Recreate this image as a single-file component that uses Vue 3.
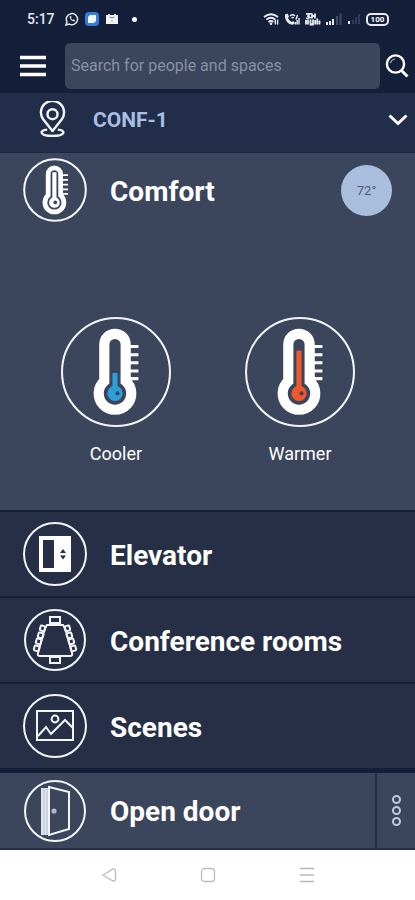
<template>
  <div class="app">
    <div class="status">
      <div class="status__group">
        <span class="status__time">5:17</span>
        <svg class="status__icon" viewBox="0 0 14 14" aria-hidden="true">
          <path d="M1 13 L2 9.8 A5.6 5.6 0 1 1 4.3 12.1 Z" fill="none" stroke="#e4e7ee" stroke-width="1.5" />
          <path d="M4.7 4.2 C4.5 7.2 6.8 9.5 9.7 9.4 L10 8 L8.5 7.3 L7.8 8 Q6.5 7.4 6 6.2 L6.6 5.5 L6 4 Z" fill="#e4e7ee" />
        </svg>
        <svg class="status__icon" viewBox="0 0 14 14" aria-hidden="true">
          <rect width="14" height="14" rx="4" fill="#2f80dc" />
          <path d="M3 5 L5 3 H11 V9 L9 11 H3 Z" fill="#f5f9ff" />
        </svg>
        <svg class="status__icon" viewBox="0 0 14 14" aria-hidden="true">
          <path d="M1 3 H3 V2 H5 V3 H9 V2 H11 V3 H13 V12 H1 Z" fill="#f1f2f5" />
          <path d="M4.5 5 L7 6 L9.5 5 M7 8.3 V9.5" fill="none" stroke="#7b8396" stroke-width="1" />
        </svg>
        <span class="status__dot"></span>
      </div>
      <div class="status__group status__group--right">
        <svg class="status__net" viewBox="0 0 16 14" aria-hidden="true">
          <path d="M1 5 Q8 -0.5 15 5 M3.3 7.6 Q8 3.8 12.5 7.6 M5.5 10 Q8 8 10.3 10" fill="none" stroke="#e9ebf1" stroke-width="1.8" />
          <circle cx="8" cy="11.8" r="1.3" fill="#e9ebf1" />
          <path d="M12.3 12.5 V8 M14.6 7.5 V12.5" stroke="#e9ebf1" stroke-width="1.4" />
        </svg>
        <svg class="status__net" viewBox="0 0 16 14" aria-hidden="true">
          <path d="M1 2.5 L3.5 1.5 L5 4.5 L4 6 Q5 8.7 7.6 10 L9 9 L11 11 L9 12.8 C4 12.8 0.5 8 1 2.5 Z" fill="#e9ebf1" />
          <path d="M6 4 Q8.5 1.5 11 4 M7.5 6 Q8.7 5 9.8 6 M12 7.5 L13.5 3" fill="none" stroke="#e9ebf1" stroke-width="1.5" />
          <path d="M11.5 12.5 V10 M13.2 12.5 V8 M15 12.5 V6" stroke="#e9ebf1" stroke-width="1.4" />
        </svg>
        <svg class="status__net" viewBox="0 0 16 14" aria-hidden="true">
          <path d="M1 1.8 H5 L3 4 L5 5.5 L1 6.5 M7 1.5 V6.5 M7 4 H10 M10 1.5 V6.5 M1 8 V12.5 M3 7.5 V12.5 M5.5 7.5 V12.5 H8 V7.5 M10.2 12.5 V8 M12.3 6.5 V12.5 M14.5 8.5 V12.5" fill="none" stroke="#e9ebf1" stroke-width="1.8" />
        </svg>
        <svg class="status__signal" viewBox="0 0 16 14" aria-hidden="true">
          <path d="M1 13 V10 M4 13 V9 M7 13 V7" stroke="#e9ebf1" stroke-width="2" />
          <path d="M11 13 V4 M14.5 13 V1.5" stroke="#3d4a68" stroke-width="2" />
        </svg>
        <svg class="status__signal status__signal--weak" viewBox="0 0 14 14" aria-hidden="true">
          <path d="M2 12 V9" stroke="#e9ebf1" stroke-width="2" />
          <path d="M6 12 V8 M9 12 V5 M12 12 V2" stroke="#2f3c59" stroke-width="2" />
        </svg>
        <span class="status__battery">100</span>
      </div>
    </div>

    <header class="topbar">
      <button class="icon-btn topbar__menu" type="button" aria-label="Menu">
        <svg viewBox="0 0 26 22" width="26" height="22">
          <path d="M0 2.5 H26 M0 11 H26 M0 19.5 H26" stroke="#fff" stroke-width="3.4" />
        </svg>
      </button>
      <input
        v-model="query"
        class="topbar__input"
        type="text"
        aria-label="Search for people and spaces"
        placeholder="Search for people and spaces"
      />
      <button class="icon-btn topbar__search" type="button" aria-label="Search">
        <svg viewBox="0 0 24 24" width="24" height="24">
          <circle cx="10.5" cy="10" r="8.6" fill="none" stroke="#fff" stroke-width="2.4" />
          <path d="M5.5 9 Q6.5 5.5 10 5" fill="none" stroke="#aab2c4" stroke-width="1.2" />
          <path d="M16.5 16.5 L22.5 22.5" stroke="#fff" stroke-width="3" />
        </svg>
      </button>
    </header>

    <button class="location" type="button">
      <svg class="location__pin" viewBox="0 0 28 38" aria-hidden="true">
        <g fill="none" stroke="#f3f5f9" stroke-width="2.5">
          <path d="M14 31 L4.5 19 A12 12 0 1 1 23.5 19 Z" stroke-linejoin="round" />
          <circle cx="14" cy="13.5" r="5.2" />
          <path d="M8.5 29.5 C0 30 0 36 14 36 S28 30 19.5 29.5" />
        </g>
      </svg>
      <span class="location__name">CONF-1</span>
      <svg class="location__chevron" viewBox="0 0 20 12" aria-hidden="true">
        <path d="M1.5 1.5 L10 9.5 L18.5 1.5" fill="none" stroke="#fff" stroke-width="3" />
      </svg>
    </button>

    <section class="comfort">
      <div class="comfort__head">
        <svg class="round" viewBox="0 0 108 108" aria-hidden="true">
          <circle cx="54" cy="54" r="52" fill="none" stroke="#f3f5f9" stroke-width="3.4" />
          <path :d="tube" fill="none" stroke="#fff" stroke-width="8" />
          <path :d="ticks" stroke="#fff" stroke-width="3" />
          <path d="M53 75 V24" stroke="#fff" stroke-width="7" />
          <circle cx="53" cy="75" r="9" fill="#fff" />
          <circle cx="54.5" cy="75" r="3.2" fill="#39445c" />
        </svg>
        <h2 class="title">Comfort</h2>
        <span class="comfort__temp">72°</span>
      </div>
      <div class="comfort__actions">
        <button v-for="mode in modes" :key="mode.label" class="mode" type="button">
          <svg class="mode__icon" viewBox="0 0 108 108" aria-hidden="true">
            <circle cx="54" cy="54" r="53" fill="none" stroke="#f3f5f9" stroke-width="2" />
            <path :d="tube" fill="none" stroke="#fff" stroke-width="10" />
            <path :d="ticks" stroke="#fff" stroke-width="3" />
            <path :d="mode.stem" :stroke="mode.color" stroke-width="5" />
            <circle cx="53" cy="75" r="7.5" :fill="mode.color" />
            <circle cx="55.5" cy="75" r="2" fill="#39445c" />
          </svg>
          <span class="mode__label">{{ mode.label }}</span>
        </button>
      </div>
    </section>

    <nav class="list" aria-label="Controls">
      <button class="row" type="button">
        <svg class="round" viewBox="0 0 64 64" aria-hidden="true">
          <circle cx="32" cy="32" r="31" fill="none" stroke="#f3f5f9" stroke-width="2" />
          <path d="M16 14 H48 V50 H16 Z M20 18 V46 H31 V18 Z" fill="#fff" fill-rule="evenodd" />
          <path d="M37 31 L40 27 L43 31 Z M37 33.5 L40 37.5 L43 33.5 Z" fill="#262f45" />
        </svg>
        <span class="title">Elevator</span>
      </button>
      <button class="row" type="button">
        <svg class="round" viewBox="0 0 64 64" aria-hidden="true">
          <g fill="none" stroke="#f3f5f9" stroke-width="2">
            <circle cx="32" cy="32" r="30" />
            <path d="M24 17 H40 L42 20 L49 45 Q50 48 47 48 H17 Q14 48 15 45 L22 20 Z" />
            <path d="M27 15 V9 H37 V15 Z M27 49 H37 V55 H27 Z" />
            <g v-for="chair in chairs" :key="chair.y">
              <rect x="-3" y="-3" width="5" height="5" rx="1" :transform="`translate(${chair.x} ${chair.y}) rotate(16)`" />
              <rect x="-2" y="-3" width="5" height="5" rx="1" :transform="`translate(${64 - chair.x} ${chair.y}) rotate(-16)`" />
            </g>
          </g>
        </svg>
        <span class="title">Conference rooms</span>
      </button>
      <button class="row" type="button">
        <svg class="round" viewBox="0 0 64 64" aria-hidden="true">
          <g fill="none" stroke="#f3f5f9" stroke-width="2">
            <circle cx="32" cy="32" r="31" />
            <rect x="14" y="17" width="36" height="29" />
            <path d="M15 42 L23 33 L28 40 L42 26 L50 34" />
            <circle cx="32" cy="25" r="3.4" />
          </g>
        </svg>
        <span class="title">Scenes</span>
      </button>
    </nav>

    <div class="door">
      <button class="row row--door" type="button">
        <svg class="round" viewBox="0 0 64 64" aria-hidden="true">
          <circle cx="32" cy="32" r="30" fill="none" stroke="#f3f5f9" stroke-width="2" />
          <path d="M18 9 H25 V56 H18 Z" fill="#dfe4ee" />
          <path d="M21 9 V56 M24 9 V56" stroke="#aeb7cb" stroke-width="0.8" />
          <path d="M26 8 L46 13 V50 L26 56 Z" fill="none" stroke="#f3f5f9" stroke-width="2" />
          <circle cx="31" cy="32" r="2.6" fill="#aeb7cb" />
        </svg>
        <span class="title">Open door</span>
      </button>
      <button class="door__more" type="button" aria-label="More options">
        <span v-for="n in 3" :key="n" class="door__dot"></span>
      </button>
    </div>

    <div class="sysnav">
      <button class="icon-btn" type="button" aria-label="Back">
        <svg viewBox="0 0 16 16" width="16" height="16">
          <path d="M2 8 L12 2 Q14.5 2 14.5 4 V12 Q14.5 14 12 14 Z" fill="none" stroke="#bdbdbd" stroke-width="1.3" />
        </svg>
      </button>
      <button class="icon-btn" type="button" aria-label="Home">
        <svg viewBox="0 0 16 16" width="16" height="16">
          <rect x="1.5" y="1.5" width="13" height="13" rx="3" fill="none" stroke="#bdbdbd" stroke-width="1.3" />
        </svg>
      </button>
      <button class="icon-btn" type="button" aria-label="Recent apps">
        <svg viewBox="0 0 16 16" width="16" height="16">
          <path d="M1 1.5 H15 M1 8 H15 M1 14.5 H15" stroke="#b9b9b9" stroke-width="1.4" />
        </svg>
      </button>
    </div>
  </div>
</template>

<script setup>
import { ref } from 'vue';

const query = ref('');

// shared thermometer outline and scale marks, 108 x 108 box
const tube = 'M42.5 63 V27 A10.5 10.5 0 0 1 63.5 27 V63 A16 16 0 1 1 42.5 63 Z';
const ticks = 'M67 29 H76 M67 37 H76 M67 45 H76 M67 53 H76 M67 60.5 H76';

const modes = [
  { label: 'Cooler', color: '#2d9fd8', stem: 'M53 75 V55' },
  { label: 'Warmer', color: '#f1592a', stem: 'M53 75 V33' }
];

// left side of the table, the right side is mirrored
const chairs = [
  { x: 20, y: 21 },
  { x: 18, y: 28 },
  { x: 16, y: 34 },
  { x: 14, y: 41 }
];
</script>

<style>
body {
  background: #14203a;
}
</style>

<style scoped>
.app {
  min-height: 100vh;
  display: flex;
  flex-direction: column;
  background: #14203a;
  color: #fff;
  font-family: Roboto, 'Liberation Sans', sans-serif;
}

button {
  margin: 0;
  padding: 0;
  border: none;
  background: none;
  color: inherit;
  font: inherit;
  text-align: left;
  cursor: pointer;
}

svg {
  display: block;
  flex-shrink: 0;
}

.icon-btn {
  display: flex;
  align-items: center;
  justify-content: center;
}

.status {
  height: 38px;
  padding: 0 26px 0 27px;
  display: flex;
  align-items: center;
  justify-content: space-between;
}

.status__group {
  display: flex;
  align-items: center;
  gap: 6px;
}

.status__group--right {
  gap: 5px;
}

.status__time {
  margin-right: 4px;
  font-size: 14px;
  font-weight: 500;
  color: #e4e7ee;
}

.status__icon {
  width: 14px;
  height: 14px;
}

.status__net {
  width: 16px;
  height: 14px;
}

.status__signal {
  width: 16px;
  height: 14px;
}

.status__signal--weak {
  width: 14px;
}

.status__dot {
  width: 5px;
  height: 5px;
  margin-left: 7px;
  border-radius: 50%;
  background: #fff;
}

.status__battery {
  width: 23px;
  height: 13px;
  box-sizing: border-box;
  border: 2px solid #e9ebf1;
  border-radius: 5px;
  font-size: 8px;
  font-weight: 700;
  line-height: 9px;
  text-align: center;
}

.topbar {
  height: 55px;
  padding: 0 6px 0 20px;
  display: flex;
  align-items: center;
}

.topbar__menu {
  margin-right: 19px;
}

.topbar__input {
  flex: 1;
  min-width: 0;
  height: 46px;
  margin: 0 5px 0 0;
  padding: 0 6px;
  border: none;
  border-radius: 5px;
  background: #3b455c;
  color: #fff;
  font: 400 16px Roboto, 'Liberation Sans', sans-serif;
}

.topbar__input::placeholder {
  color: #8790a4;
  opacity: 1;
}

.location {
  height: 60px;
  padding: 0 7px 6px 39px;
  display: flex;
  align-items: center;
  background: #222d49;
  border-bottom: 1px solid #1c2740;
}

.location__pin {
  width: 27px;
  height: 37px;
}

.location__name {
  flex: 1;
  margin-left: 27px;
  font-size: 21px;
  font-weight: 700;
  color: #a9bfe3;
}

.location__chevron {
  width: 20px;
  height: 12px;
}

.comfort {
  flex: 1;
  padding-bottom: 45px;
  display: flex;
  flex-direction: column;
  justify-content: space-between;
  gap: 24px;
  background: #3b455c;
}

.comfort__head {
  padding: 5px 23px;
  display: flex;
  align-items: center;
}

.comfort__temp {
  width: 51px;
  height: 51px;
  margin-left: auto;
  border-radius: 50%;
  display: flex;
  align-items: center;
  justify-content: center;
  background: #a9bddd;
  color: #4f5b74;
  font-size: 13px;
}

.comfort__actions {
  padding: 0 23px 0 24px;
  display: grid;
  grid-template-columns: 1fr 1fr;
}

.mode {
  display: flex;
  flex-direction: column;
  align-items: center;
  gap: 16px;
}

.mode__icon {
  width: 110px;
  height: 110px;
}

.mode__label {
  font-size: 18px;
  line-height: 22px;
}

.round {
  width: 64px;
  height: 64px;
}

.title {
  margin: 0 0 0 23px;
  padding-top: 3px;
  font-size: 28px;
  line-height: 32px;
  font-weight: 700;
}

.list {
  padding: 2px 0 5px;
  display: flex;
  flex-direction: column;
  gap: 2px;
}

.row {
  height: 84px;
  padding: 0 23px;
  display: flex;
  align-items: center;
  background: #262f45;
}

.door {
  display: flex;
  border-bottom: 2px solid #22304e;
}

.row--door {
  flex: 1;
  height: 75px;
  background: #3b455c;
}

.door__more {
  width: 40px;
  border-left: 2px solid #222e45;
  display: flex;
  flex-direction: column;
  align-items: center;
  justify-content: center;
  gap: 2px;
  background: #3b455c;
}

.door__dot {
  width: 9px;
  height: 9px;
  box-sizing: border-box;
  border: 2px solid #bccbe6;
  border-radius: 50%;
}

.sysnav {
  height: 50px;
  padding: 0 59px;
  display: grid;
  grid-template-columns: repeat(3, 1fr);
  background: #fff;
}
</style>
